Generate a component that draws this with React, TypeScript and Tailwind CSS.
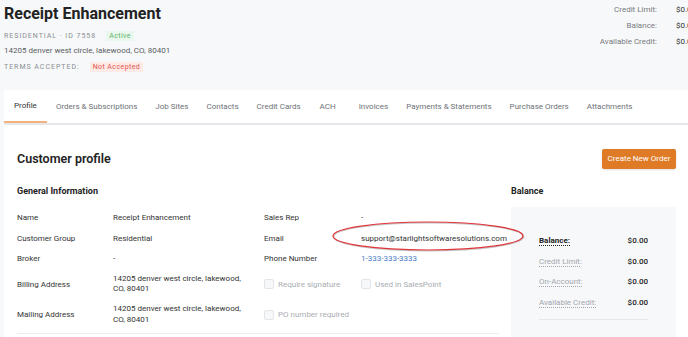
import React from 'react';

const tabs = [
  'Profile',
  'Orders & Subscriptions',
  'Job Sites',
  'Contacts',
  'Credit Cards',
  'ACH',
  'Invoices',
  'Payments & Statements',
  'Purchase Orders',
  'Attachments',
];

const Checkbox: React.FC<{ label: string }> = ({ label }) => (
  <div className="flex items-center gap-[4px] whitespace-nowrap">
    <span className="w-[10px] h-[10px] rounded-[2px] border border-[#e3e5e8] bg-[#f7f8f9]" />
    <span className="text-[#a9adb2]">{label}</span>
  </div>
);

const BalanceRow: React.FC<{ label: string; strong?: boolean }> = ({ label, strong }) => (
  <div className="flex h-[12px] items-center justify-between">
    <span
      className={
        strong
          ? 'font-bold text-[#222] underline decoration-dotted underline-offset-2'
          : 'text-[#a3a7ad] underline decoration-dotted underline-offset-2'
      }
    >
      {label}
    </span>
    <span className="font-medium text-[#222]">$0.00</span>
  </div>
);

const App: React.FC = () => {
  return (
    <div className="relative w-[688px] h-[337px] overflow-hidden bg-[#f7f8fa] font-['Roboto',sans-serif] text-[8px] text-[#333]">
      {/* header */}
      <div className="flex items-start pl-[4px]">
        <div>
          <h1 className="mt-[4px] h-[20px] text-[16px] leading-[20px] font-bold text-[#222]">Receipt Enhancement</h1>
          <div className="mt-[6px] flex h-[12px] items-center gap-[10px]">
            <span className="text-[7px] tracking-[0.14em] text-[#8a8d91]">RESIDENTIAL · ID 7558</span>
            <span className="bg-[#e9f7ec] px-[3px] text-[7px] leading-[10px] tracking-[0.06em] text-[#5cb46a]">Active</span>
          </div>
          <div className="mt-[3px] h-[12px] leading-[12px] text-[#5a5d61]">14205 denver west circle, lakewood, CO, 80401</div>
          <div className="mt-[4px] flex h-[12px] items-center gap-[10px]">
            <span className="text-[7px] tracking-[0.14em] text-[#8a8d91]">TERMS ACCEPTED:</span>
            <span className="bg-[#fde9e6] px-[3px] text-[7px] leading-[10px] tracking-[0.06em] text-[#e0574c]">Not Accepted</span>
          </div>
        </div>
        <div className="ml-auto grid grid-cols-[auto_12px] content-start gap-x-[19px] gap-y-[4px] pt-[4px]">
          <span className="h-[12px] leading-[12px] text-right text-[#777b80]">Credit Limit:</span>
          <span className="h-[12px] leading-[12px] whitespace-nowrap text-[#333]">$0.00</span>
          <span className="h-[12px] leading-[12px] text-right text-[#777b80]">Balance:</span>
          <span className="h-[12px] leading-[12px] whitespace-nowrap text-[#333]">$0.00</span>
          <span className="h-[12px] leading-[12px] text-right text-[#777b80]">Available Credit:</span>
          <span className="h-[12px] leading-[12px] whitespace-nowrap text-[#333]">$0.00</span>
        </div>
      </div>

      {/* tabs */}
      <div className="ml-[4px] mt-[17px] flex border-b-2 border-[#e6e8eb] bg-white">
        {tabs.map((t, i) => (
          <div
            key={t}
            className={
              i === 0
                ? 'flex h-[33px] items-center px-[10px] -mb-[2px] border-b-2 border-[#f4b17f] text-[#333] whitespace-nowrap'
                : t === 'ACH'
                ? 'flex h-[33px] items-center pl-[10px] pr-[14px] text-[#6e7276] whitespace-nowrap'
                : 'flex h-[33px] items-center px-[9px] text-[#6e7276] whitespace-nowrap'
            }
          >
            {t}
          </div>
        ))}
      </div>

      {/* content */}
      <div className="ml-[4px] bg-white pl-[13px] pr-[12px] pt-[24px] pb-[20px]">
        <div className="flex h-[20px] items-center justify-between">
          <h2 className="text-[12.5px] font-semibold text-[#222]">Customer profile</h2>
          <button className="h-[20px] w-[74px] rounded-[2px] bg-[#df7b27] text-[8px] text-white shadow-sm">
            Create New Order
          </button>
        </div>

        <div className="mt-[16px] flex gap-[12px]">
          <div className="w-[482px]">
            <div className="h-[12px] leading-[12px] text-[9px] font-bold text-[#222]">General Information</div>
            <div className="mt-[15px] grid grid-cols-[96px_151px_97px_138px] items-center gap-y-[9.5px] leading-[11px]">
              <span>Name</span>
              <span>Receipt Enhancement</span>
              <span>Sales Rep</span>
              <span>-</span>

              <span>Customer Group</span>
              <span>Residential</span>
              <span>Email</span>
              <span className="whitespace-nowrap">support@starlightsoftwaresolutions.com</span>

              <span>Broker</span>
              <span>-</span>
              <span>Phone Number</span>
              <span className="text-[#4b7bc4]">1-333-333-3333</span>

              <span>Billing Address</span>
              <span className="max-w-[135px] leading-[10.5px]">14205 denver west circle, lakewood, CO, 80401</span>
              <Checkbox label="Require signature" />
              <Checkbox label="Used in SalesPoint" />

              <span>Mailing Address</span>
              <span className="max-w-[135px] leading-[10.5px]">14205 denver west circle, lakewood, CO, 80401</span>
              <Checkbox label="PO number required" />
              <span />
            </div>
            <div className="mt-[8px] border-t border-[#eceef0]" />
          </div>

          <div className="w-[165px]">
            <div className="h-[12px] leading-[12px] text-[9px] font-bold text-[#222]">Balance</div>
            <div className="mt-[10px] h-[140px] bg-[#f7f8fa] pl-[28px] pt-[28px]">
              <div className="flex w-[109px] flex-col gap-[8.6px]">
                <BalanceRow label="Balance:" strong />
                <BalanceRow label="Credit Limit:" />
                <BalanceRow label="On-Account:" />
                <BalanceRow label="Available Credit:" />
              </div>
              <div className="mt-[10px] w-[109px] border-t border-[#e6e8eb]" />
            </div>
          </div>
        </div>
      </div>

      {/* annotation ellipse around email */}
      <svg
        className="pointer-events-none absolute left-[330px] top-[219px]"
        width="196"
        height="34"
        viewBox="0 0 196 34"
      >
        <ellipse cx="98" cy="17" rx="95" ry="14" fill="none" stroke="#c8c8c8" strokeWidth="1.4" transform="translate(0.6 0.8)" />
        <ellipse cx="98" cy="17" rx="95" ry="14" fill="none" stroke="#e0353b" strokeWidth="1.2" />
      </svg>
    </div>
  );
};

export default App;
